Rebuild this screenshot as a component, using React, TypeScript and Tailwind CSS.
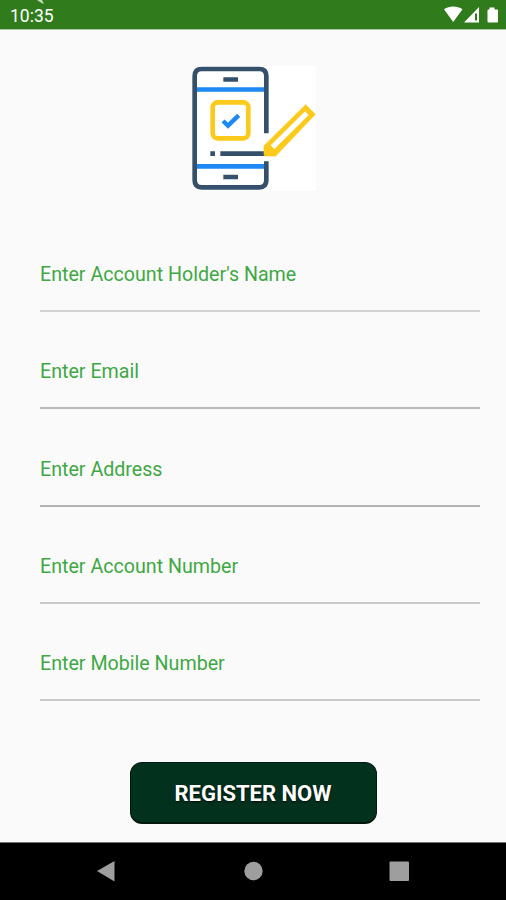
import React from "react";

const fields = [
  { name: "holder", label: "Enter Account Holder's Name", line: "bg-[#d2d2d2]" },
  { name: "email", label: "Enter Email", line: "bg-[#bababa]" },
  { name: "address", label: "Enter Address", line: "bg-[#b4b4b4]" },
  { name: "account", label: "Enter Account Number", line: "bg-[#c8c8c8]" },
  { name: "mobile", label: "Enter Mobile Number", line: "bg-[#cacaca]" },
];

function StatusBar() {
  return (
    <div className="h-[30px] shrink-0 overflow-hidden bg-[#307c1c] border-b border-[#a9c5a2] flex justify-between text-white relative">
      <span className="pl-[10px] pt-[5px] text-[17.5px] leading-[22px]">10:35</span>
      <svg className="absolute left-[37px] top-0" width="9" height="5" viewBox="0 0 9 5">
        <path d="M0 0H5L7 4L4.500 3Z" fill="#c3d5bf" />
      </svg>
      <svg width="62" height="29" viewBox="0 0 62 29" fill="currentColor">
        <path d="M0 9.300C5.500 5.600 13 5.600 18.500 9.300L9.200 22Z" />
        <path fillRule="evenodd" d="M35 7V22.500H20ZM33 13.500H31V20.500H33Z" />
        <path d="M45.500 7.500H50.500V9.500H53Q54 9.500 54 10.500V21.500Q54 22.500 53 22.500H44.500Q43.500 22.500 43.500 21.500V10.500Q43.500 9.500 44.500 9.500H45.500Z" />
      </svg>
    </div>
  );
}

function RegisterIcon() {
  return (
    <svg className="bg-white ml-[2px]" width="124" height="125" viewBox="0 0 372 375" fill="none">
      <g stroke="#34506b" strokeWidth="14">
        <path d="M223 202V30Q223 9 202 9H29Q8 9 8 30V343Q8 364 29 364H202Q223 364 223 343V286" />
        <path d="M94 40.500H138M94 333H138M55 263H69M85 263H220" />
      </g>
      <path d="M15 70.500H216M15 301H216" stroke="#1e88f5" strokeWidth="14" />
      <rect x="62" y="109" width="107" height="108" rx="15" stroke="#fcca1c" strokeWidth="14" />
      <path d="M93 165L108 179L140 148" stroke="#1e88f5" strokeWidth="13" />
      <path
        d="M341 116L370 145L251 270H221Q216 270 216 265V239ZM339 135L235 238L247 250L351 147Z"
        fill="#fcca1c"
        stroke="#fcca1c"
        strokeWidth="2"
        fillRule="evenodd"
      />
    </svg>
  );
}

function Field({ name, label, line }: { name: string; label: string; line: string }) {
  return (
    <div className="h-[97.25px]">
      <label htmlFor={name} className="block h-[47px] text-[19.650px] leading-[24px] text-[#3fa845]">
        {label}
      </label>
      <div id={name} className={`h-[2px] w-full ${line}`} />
    </div>
  );
}

function NavBar() {
  return (
    <div className="h-[58px] shrink-0 bg-black border-t border-[#777] text-[#9e9e9e]">
      <svg width="506" height="57" viewBox="0 0 506 57" fill="currentColor">
        <path d="M97 28L114.500 18V38.500Z" />
        <circle cx="253.500" cy="28" r="9.200" />
        <rect x="389.500" y="18.500" width="19.500" height="19.500" rx="1" />
      </svg>
    </div>
  );
}

function App() {
  return (
    <div className="w-[506px] h-[900px] bg-[#fafafa] flex flex-col overflow-hidden font-['Roboto',sans-serif]">
      <StatusBar />
      <main className="flex-1 min-h-0 flex flex-col items-center pt-[36px]">
        <RegisterIcon />
        <form className="w-[440px] ml-[14px] mt-[72px]">
          {fields.map((field) => (
            <Field key={field.name} {...field} />
          ))}
        </form>
        <button className="mt-[12.500px] pt-[2px] w-[247px] h-[62px] shrink-0 rounded-xl border border-[#02180d] border-b-2 bg-[#02311d] text-white text-[22px] font-bold [text-shadow:0_1px_2px_rgba(0,0,0,0.8)]">
          REGISTER NOW
        </button>
      </main>
      <NavBar />
    </div>
  );
}

export default App;
